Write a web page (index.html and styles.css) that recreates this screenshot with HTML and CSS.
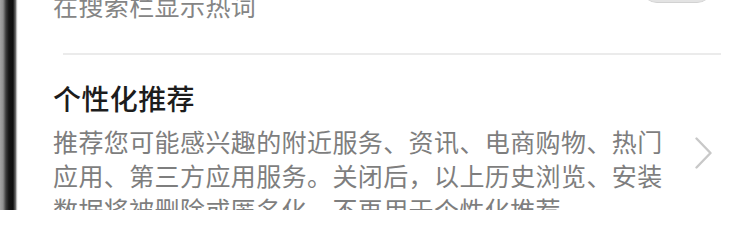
FILE: index.html
```html
<!DOCTYPE html>
<html lang="zh-CN">
<head>
<meta charset="utf-8">
<title>设置</title>
<link rel="stylesheet" href="styles.css">
</head>
<body>
<div class="screen">
  <div class="bezel"></div>
  <div class="content">
    <div class="item item-top">
      <div class="text">
        <div class="title">搜索热词</div>
        <div class="desc">在搜索栏显示热词</div>
      </div>
      <div class="switch"></div>
    </div>
    <div class="divider"></div>
    <div class="item item-rec">
      <div class="text">
        <div class="title">个性化推荐</div>
        <div class="desc desc-rec">推荐您可能感兴趣的附近服务、资讯、电商购物、热门应用、第三方应用服务。关闭后，以上历史浏览、安装数据将被删除或匿名化，不再用于个性化推荐。</div>
      </div>
      <svg class="chevron" width="17" height="32" viewBox="0 0 17 32" aria-hidden="true">
        <polyline points="1.5,1.5 15.5,16 1.5,30.5" fill="none" stroke="#c8c8c8" stroke-width="2.4" stroke-linecap="round" stroke-linejoin="round"/>
      </svg>
    </div>
  </div>
</div>
</body>
</html>
```

FILE: styles.css
```css
html, body {
  margin: 0;
  padding: 0;
  height: 210px;
  overflow: hidden;
  background: #ffffff;
}

.screen {
  display: flex;
  height: 210px;
  overflow: hidden;
  font-family: "Noto Sans CJK SC", "Noto Sans", sans-serif;
}

.bezel {
  flex: 0 0 18px;
  background: linear-gradient(to right,
    #a4a4a4 0px, #909090 3px, #3a3a3a 6px, #141414 9px,
    #0e0e0e 13px, #6a6a6a 15.5px, #e6e6e6 17px, #ffffff 18px);
}

.content {
  flex: 1;
  align-self: flex-start;
  margin-top: -46px;
  padding: 0 17px 0 35px;
  background: #ffffff;
}

.item {
  display: flex;
  align-items: center;
  gap: 27px;
}

.text {
  flex: 1;
  min-width: 0;
}

.title {
  font-size: 28px;
  line-height: 34px;
  font-weight: 500;
  color: #1c1c1c;
  letter-spacing: 0.4px;
}

.desc {
  font-size: 25px;
  line-height: 34px;
  color: #7e7e7e;
  letter-spacing: 0.4px;
}

.item-top .desc {
  color: #858585;
}

.switch {
  flex: 0 0 70px;
  height: 30px;
  border-radius: 15px;
  background: #e3e3e3;
  box-sizing: border-box;
  border-bottom: 1px solid #d2d2d2;
}

.divider {
  height: 1.5px;
  margin: 31px -9px 0 10px;
  background: #ebebeb;
}

.item-rec {
  margin-top: 26px;
}

.desc-rec {
  margin-top: 9px;
}

.chevron {
  flex: 0 0 17px;
  display: block;
}
```
